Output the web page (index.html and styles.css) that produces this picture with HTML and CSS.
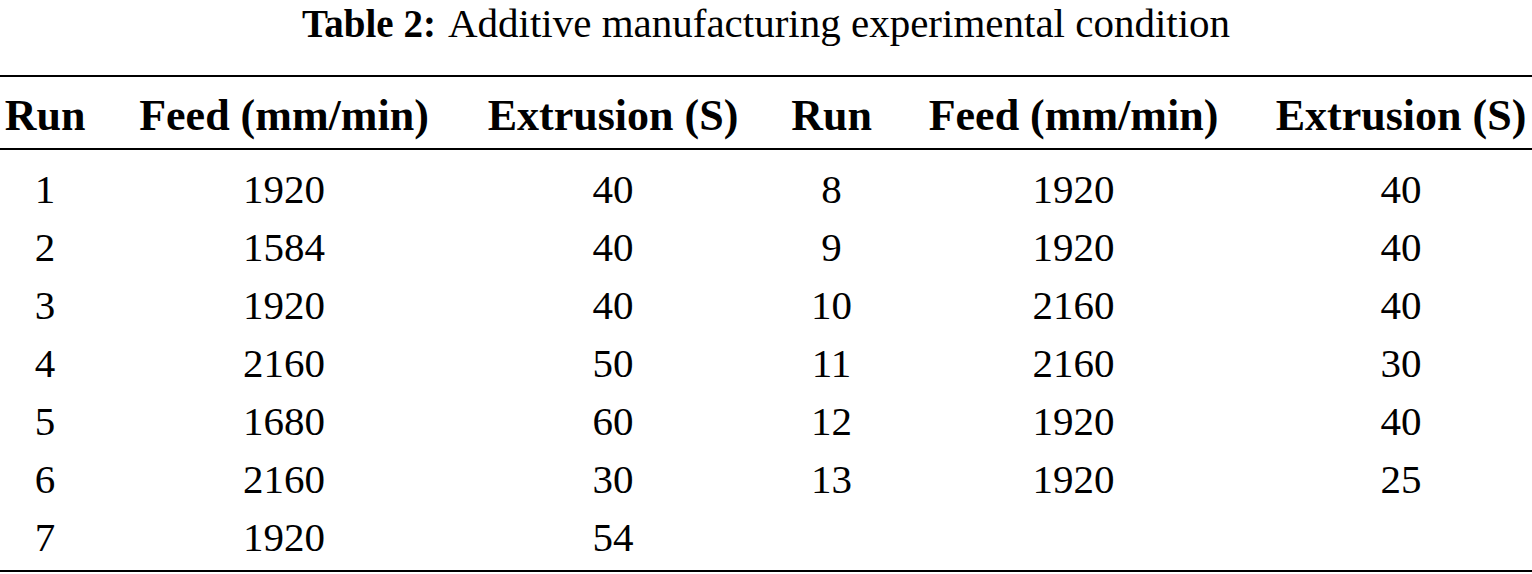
FILE: index.html
```html
<!DOCTYPE html>
<html lang="en">
<head>
<meta charset="utf-8">
<title>Table 2: Additive manufacturing experimental condition</title>
<link rel="stylesheet" href="styles.css">
</head>
<body>
<figure class="table-figure">
  <div class="caption"><span class="caption-label">Table 2:</span>Additive manufacturing experimental condition</div>
  <table class="data-table">
    <colgroup>
      <col class="col-run">
      <col class="col-feed">
      <col class="col-ext">
      <col class="col-run2">
      <col class="col-feed2">
      <col class="col-ext2">
    </colgroup>
    <thead>
      <tr>
        <th class="first">Run</th>
        <th>Feed (mm/min)</th>
        <th>Extrusion (S)</th>
        <th>Run</th>
        <th>Feed (mm/min)</th>
        <th class="last">Extrusion (S)</th>
      </tr>
    </thead>
    <tbody>
      <tr><td class="first">1</td><td>1920</td><td>40</td><td>8</td><td>1920</td><td class="last">40</td></tr>
      <tr><td class="first">2</td><td>1584</td><td>40</td><td>9</td><td>1920</td><td class="last">40</td></tr>
      <tr><td class="first">3</td><td>1920</td><td>40</td><td>10</td><td>2160</td><td class="last">40</td></tr>
      <tr><td class="first">4</td><td>2160</td><td>50</td><td>11</td><td>2160</td><td class="last">30</td></tr>
      <tr><td class="first">5</td><td>1680</td><td>60</td><td>12</td><td>1920</td><td class="last">40</td></tr>
      <tr><td class="first">6</td><td>2160</td><td>30</td><td>13</td><td>1920</td><td class="last">25</td></tr>
      <tr><td class="first">7</td><td>1920</td><td>54</td><td></td><td></td><td class="last"></td></tr>
    </tbody>
  </table>
</figure>
</body>
</html>
```

FILE: styles.css
```css
html, body {
  margin: 0;
  padding: 0;
  background: #ffffff;
}

body {
  font-family: "Liberation Serif", "Times New Roman", serif;
  color: #000000;
  width: 1532px;
}

.table-figure {
  margin: 0;
  padding: 0;
}

.caption {
  font-size: 41px;
  line-height: 46px;
  text-align: center;
  margin: 0 0 28px 0;
  white-space: nowrap;
}

.caption-label {
  font-weight: bold;
  font-size: 39px;
  margin-right: 12px;
}

.data-table {
  width: 1532px;
  border-collapse: collapse;
  table-layout: fixed;
}

.col-run { width: 108px; }
.col-feed { width: 352px; }
.col-ext { width: 306px; }
.col-run2 { width: 131px; }
.col-feed2 { width: 353px; }
.col-ext2 { width: 282px; }

.data-table th,
.data-table td {
  padding: 0;
  text-align: center;
  white-space: nowrap;
}

.data-table thead th {
  font-weight: bold;
  font-size: 44px;
  line-height: 64px;
  padding-top: 7px;
  border-top: 2px solid #000;
  border-bottom: 2px solid #000;
}

.data-table tbody td {
  font-size: 41px;
  line-height: 58px;
}

.data-table tbody tr:first-child td {
  padding-top: 10px;
}

.data-table tbody tr:last-child td {
  padding-bottom: 4px;
  border-bottom: 2px solid #000;
}

.data-table .first {
  padding-right: 18px;
}

.data-table .last {
  padding-left: 20px;
}
```
